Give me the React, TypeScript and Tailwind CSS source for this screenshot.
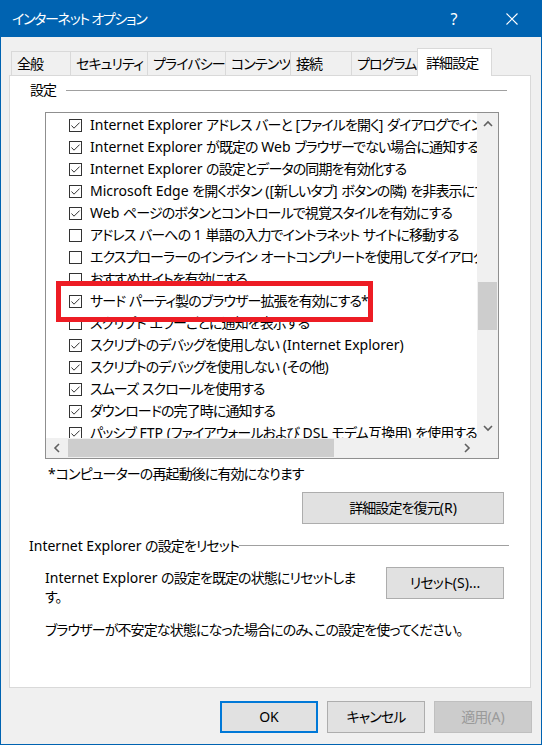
import React from "react";

type Row = { checked: boolean; label: string };

const rows: Row[] = [
  { checked: true, label: "Internet Explorer アドレス バーと [ファイルを開く] ダイアログでインターネット アドレスを使用する" },
  { checked: true, label: "Internet Explorer が既定の Web ブラウザーでない場合に通知する" },
  { checked: true, label: "Internet Explorer の設定とデータの同期を有効化する" },
  { checked: true, label: "Microsoft Edge を開くボタン ([新しいタブ] ボタンの隣) を非表示にする" },
  { checked: true, label: "Web ページのボタンとコントロールで視覚スタイルを有効にする" },
  { checked: false, label: "アドレス バーへの 1 単語の入力でイントラネット サイトに移動する" },
  { checked: false, label: "エクスプローラーのインライン オートコンプリートを使用してダイアログを実行する" },
  { checked: false, label: "おすすめサイトを有効にする" },
  { checked: true, label: "サード パーティ製のブラウザー拡張を有効にする*" },
  { checked: false, label: "スクリプト エラーごとに通知を表示する" },
  { checked: true, label: "スクリプトのデバッグを使用しない (Internet Explorer)" },
  { checked: true, label: "スクリプトのデバッグを使用しない (その他)" },
  { checked: true, label: "スムーズ スクロールを使用する" },
  { checked: true, label: "ダウンロードの完了時に通知する" },
  { checked: true, label: "パッシブ FTP (ファイアウォールおよび DSL モデム互換用) を使用する" },
];

const tabs = [
  { label: "全般", w: "w-[59px]" },
  { label: "セキュリティ", w: "w-[77px]" },
  { label: "プライバシー", w: "w-[78px]" },
  { label: "コンテンツ", w: "w-[65px]" },
  { label: "接続", w: "w-[61px]" },
  { label: "プログラム", w: "w-[66px]" },
];

// Japanese runs get tighter spacing than the latin ones (UI font has narrow kana)
const J = ({ text }: { text: string }) => (
  <>
    {text.split(/([\x20-\x7E]+)/).map((part, i) =>
      /^[\x20-\x7E]+$/.test(part) ? (
        <span key={i}>{part}</span>
      ) : (
        <span key={i} className="tracking-[-0.9px]">
          {part}
        </span>
      )
    )}
  </>
);

// scrollbar arrow, one shape per direction
const Chevron = ({ dir }: { dir: "up" | "down" | "left" | "right" }) => {
  const pts = {
    up: "1,6 5,2 9,6",
    down: "1,2 5,6 9,2",
    left: "6,1 2,5 6,9",
    right: "2,1 6,5 2,9",
  }[dir];
  const vertical = dir === "up" || dir === "down";
  return (
    <svg width={vertical ? 10 : 8} height={vertical ? 8 : 10} viewBox={vertical ? "0 0 10 8" : "0 0 8 10"}>
      <polyline points={pts} fill="none" stroke="#606060" strokeWidth="1.6" />
    </svg>
  );
};

const Checkbox = ({ checked }: { checked: boolean }) => (
  <div className="w-[13px] h-[13px] shrink-0 border border-[#333333] bg-white flex items-center justify-center">
    {checked && (
      <svg width="11" height="11" viewBox="0 0 11 11">
        <polyline points="1.5,5.5 4,8.2 9.6,2.6" fill="none" stroke="#333333" strokeWidth="1" />
      </svg>
    )}
  </div>
);

const WinButton = ({
  label,
  className = "",
  variant = "normal",
}: {
  label: string;
  className?: string;
  variant?: "normal" | "default" | "disabled";
}) => {
  const styles = {
    normal: "border border-[#adadad] bg-[#e1e1e1] text-black",
    default: "border-2 border-[#0078d7] bg-[#e1e1e1] text-black",
    disabled: "border border-[#bfbfbf] bg-[#cccccc] text-[#9a9a9a]",
  }[variant];
  return (
    <div className={`h-[32px] flex items-center justify-center whitespace-nowrap ${styles} ${className}`}>
      <J text={label} />
    </div>
  );
};

export default function App() {
  return (
    <div className="w-[542px] h-[745px] flex flex-col bg-[#f0f0f0] border-x border-b border-[#0063b1] text-[14px] text-black font-['Noto_Sans','Noto_Sans_CJK_JP',sans-serif] [font-feature-settings:'palt'] leading-[20px] overflow-hidden">
      {/* Title bar */}
      <div className="h-[37px] shrink-0 bg-[#0063b1] text-white flex items-center">
        <div className="pl-[11px] flex-1 text-[14px] tracking-[-1.3px]">インターネット オプション</div>
        <div className="w-[58px] h-full flex items-center justify-center text-[16px]">?</div>
        <div className="w-[58px] h-full flex items-center justify-center">
          <svg width="12" height="12" viewBox="0 0 12 12">
            <path d="M0.5 0.5 L11.5 11.5 M11.5 0.5 L0.5 11.5" stroke="#ffffff" strokeWidth="1.1" />
          </svg>
        </div>
      </div>

      {/* Tabs */}
      <div className="h-[38px] shrink-0 flex items-end pl-[10px]">
        {tabs.map((t) => (
          <div
            key={t.label}
            className={`${t.w} h-[24px] border-t border-l border-[#d9d9d9] pl-[5px] flex items-center whitespace-nowrap`}
          >
            <J text={t.label} />
          </div>
        ))}
        <div className="relative z-10 w-[75px] h-[28px] -mb-px bg-white border-t border-x border-[#d9d9d9] pl-[8px] flex items-center whitespace-nowrap">
          <J text="詳細設定" />
        </div>
      </div>

      {/* Panel */}
      <div className="ml-[8px] mr-[10px] h-[613px] shrink-0 bg-white border border-[#d9d9d9] flex flex-col">
        <div className="mt-[4px] h-[20px] flex items-center pl-[20px] pr-[23px]">
          <J text="設定" />
          <div className="flex-1 h-px bg-[#a0a0a0] ml-[10px]" />
        </div>

        {/* Settings tree */}
        <div className="relative ml-[35px] mt-[12px] w-[454px] h-[347px] border border-[#8f8f8f] flex flex-col">
          <div className="flex h-[325px]">
            <div className="flex-1 overflow-hidden pt-[1px]">
              {rows.map((r) => (
                <div key={r.label} className="h-[22px] flex items-center pl-[23px] whitespace-nowrap">
                  <Checkbox checked={r.checked} />
                  <span className="ml-[8px]">
                    <J text={r.label} />
                  </span>
                </div>
              ))}
            </div>
            <div className="w-[21px] bg-[#f0f0f0] flex flex-col">
              <div className="h-[21px] flex items-center justify-center">
                <Chevron dir="up" />
              </div>
              <div className="flex-1 pt-[148px] px-[1px]">
                <div className="h-[48px] bg-[#cdcdcd]" />
              </div>
              <div className="h-[21px] flex items-center justify-center">
                <Chevron dir="down" />
              </div>
            </div>
          </div>
          <div className="h-[20px] flex bg-[#f0f0f0]">
            <div className="w-[21px] flex items-center justify-center">
              <Chevron dir="left" />
            </div>
            <div className="flex-1 py-[1px]">
              <div className="ml-[1px] w-[266px] h-full bg-[#cdcdcd]" />
            </div>
            <div className="w-[21px] flex items-center justify-center">
              <Chevron dir="right" />
            </div>
            <div className="w-[21px]" />
          </div>

          {/* highlight annotation */}
          <div className="absolute left-[10px] top-[168px] w-[317px] h-[41px] border-[5px] border-[#ed1c24]" />
        </div>

        <div className="mt-[5px] h-[20px] pl-[38px] whitespace-nowrap">
          <J text="*コンピューターの再起動後に有効になります" />
        </div>

        <div className="mt-[8px] flex justify-end pr-[26px]">
          <WinButton className="w-[202px]" label="詳細設定を復元(R)" />
        </div>

        <div className="mt-[12px] h-[20px] flex items-center pl-[19px] pr-[21px]">
          <span className="whitespace-nowrap">
            <J text="Internet Explorer の設定をリセット" />
          </span>
          <div className="flex-1 h-px bg-[#a0a0a0] -mt-[2px]" />
        </div>

        <div className="mt-[11px] flex items-start pl-[35px] pr-[26px]">
          <div className="pt-[1px] leading-[19px] whitespace-nowrap">
            <J text="Internet Explorer の設定を既定の状態にリセットしま" />
            <br />
            <J text="す。" />
          </div>
          <WinButton className="ml-auto w-[118px]" label="リセット(S)..." />
        </div>

        <div className="mt-[14px] h-[20px] pl-[35px] whitespace-nowrap">
          <J text="ブラウザーが不安定な状態になった場合にのみ、この設定を使ってください。" />
        </div>
      </div>

      {/* Dialog buttons */}
      <div className="mt-[13px] flex justify-end gap-[9px] pr-[9px]">
        <WinButton variant="default" className="w-[98px]" label="OK" />
        <WinButton className="w-[98px]" label="キャンセル" />
        <WinButton variant="disabled" className="w-[98px]" label="適用(A)" />
      </div>
    </div>
  );
}
